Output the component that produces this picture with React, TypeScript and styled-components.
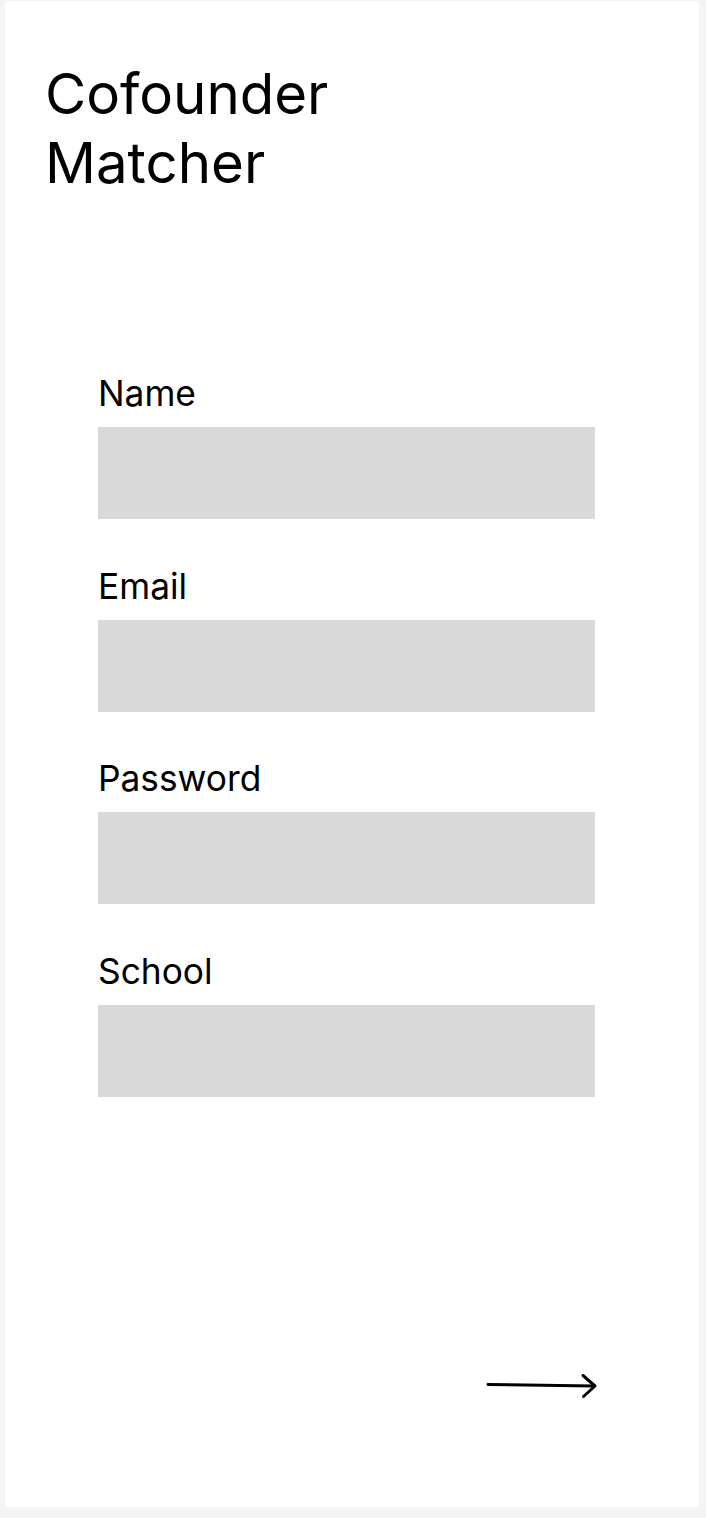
import React from "react";
import styled, { createGlobalStyle } from "styled-components";

const GlobalStyle = createGlobalStyle`
  html, body {
    margin: 0;
    padding: 0;
    background: #f4f4f4;
  }
  * { box-sizing: border-box; }
`;

const Page = styled.div`
  padding: 1px 7px 11px 5px;
  font-family: Inter, "Noto Sans", sans-serif;
  color: #000;
`;

const Card = styled.main`
  width: 694px;
  height: 1506px;
  background: #ffffff;
  padding: 58px 40px 0 40px;
  display: flex;
  flex-direction: column;
`;

const Title = styled.h1`
  margin: 0;
  font-size: 56.4px;
  line-height: 69px;
  font-weight: 400;
  width: 320px;
`;

const Form = styled.form`
  margin: 174px 0 0 53px;
  width: 497px;
  display: flex;
  flex-direction: column;
  gap: 44.6px;
`;

const Field = styled.label`
  display: flex;
  flex-direction: column;
  gap: 11px;
`;

const LabelText = styled.span`
  font-size: 35.3px;
  line-height: 45px;
  font-weight: 400;
`;

const InputBox = styled.input`
  display: block;
  width: 497px;
  height: 92px;
  border: none;
  background: #d9d9d9;
  outline: none;
  padding: 0 16px;
  font: inherit;
`;

const ArrowRow = styled.div`
  margin: 275px 0 0 53px;
  width: 497px;
  display: flex;
  justify-content: flex-end;
`;

const ArrowButton = styled.button`
  border: none;
  background: transparent;
  padding: 0;
  margin-right: -5px;
  cursor: pointer;
  display: block;
  line-height: 0;
`;

const fields = ["Name", "Email", "Password", "School"];

export default function App() {
  return (
    <>
      <GlobalStyle />
      <Page>
        <Card>
          <Title>Cofounder Matcher</Title>
          <Form onSubmit={(e) => e.preventDefault()}>
            {fields.map((f) => (
              <Field key={f}>
                <LabelText>{f}</LabelText>
                <InputBox
                  type={f === "Password" ? "password" : f === "Email" ? "email" : "text"}
                />
              </Field>
            ))}
          </Form>
          <ArrowRow>
            <ArrowButton type="button" aria-label="Next">
              <svg width="116" height="30" viewBox="0 0 116 30" fill="none">
                <path
                  d="M4 12.4 L110 14"
                  stroke="#000"
                  strokeWidth="3"
                  strokeLinecap="round"
                />
                <path
                  d="M99 3.5 L111 14 L99.5 24.5"
                  stroke="#000"
                  strokeWidth="3"
                  strokeLinecap="round"
                  strokeLinejoin="round"
                />
              </svg>
            </ArrowButton>
          </ArrowRow>
        </Card>
      </Page>
    </>
  );
}
